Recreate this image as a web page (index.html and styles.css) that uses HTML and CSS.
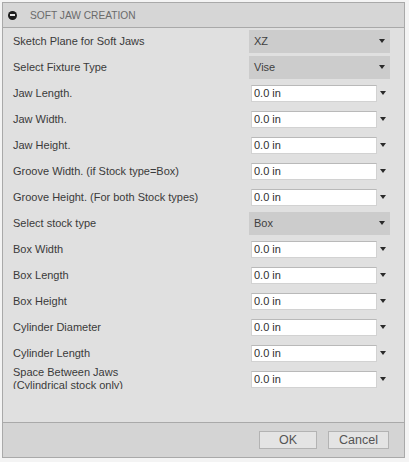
FILE: index.html
```html
<!DOCTYPE html>
<html>
<head>
<meta charset="utf-8">
<link rel="stylesheet" href="styles.css">
</head>
<body>
<div class="panel">
  <div class="header">
    <span class="collapse"><span class="minus"></span></span>
    <span class="title">SOFT JAW CREATION</span>
  </div>
  <div class="body">
    <div class="row"><div class="label">Sketch Plane for Soft Jaws</div><div class="select"><span>XZ</span><span class="tri"></span></div></div>
    <div class="row"><div class="label">Select Fixture Type</div><div class="select"><span>Vise</span><span class="tri"></span></div></div>
    <div class="row"><div class="label">Jaw Length.</div><div class="field"><div class="input">0.0 in</div><span class="tri"></span></div></div>
    <div class="row"><div class="label">Jaw Width.</div><div class="field"><div class="input">0.0 in</div><span class="tri"></span></div></div>
    <div class="row"><div class="label">Jaw Height.</div><div class="field"><div class="input">0.0 in</div><span class="tri"></span></div></div>
    <div class="row"><div class="label">Groove Width. (if Stock type=Box)</div><div class="field"><div class="input">0.0 in</div><span class="tri"></span></div></div>
    <div class="row"><div class="label">Groove Height. (For both Stock types)</div><div class="field"><div class="input">0.0 in</div><span class="tri"></span></div></div>
    <div class="row"><div class="label">Select stock type</div><div class="select"><span>Box</span><span class="tri"></span></div></div>
    <div class="row"><div class="label">Box Width</div><div class="field"><div class="input">0.0 in</div><span class="tri"></span></div></div>
    <div class="row"><div class="label">Box Length</div><div class="field"><div class="input">0.0 in</div><span class="tri"></span></div></div>
    <div class="row"><div class="label">Box Height</div><div class="field"><div class="input">0.0 in</div><span class="tri"></span></div></div>
    <div class="row"><div class="label">Cylinder Diameter</div><div class="field"><div class="input">0.0 in</div><span class="tri"></span></div></div>
    <div class="row"><div class="label">Cylinder Length</div><div class="field"><div class="input">0.0 in</div><span class="tri"></span></div></div>
    <div class="row"><div class="label label-two">Space Between Jaws<br>(Cylindrical stock only)</div><div class="field"><div class="input">0.0 in</div><span class="tri"></span></div></div>
  </div>
  <div class="footer">
    <button class="btn btn-ok">OK</button>
    <button class="btn btn-cancel">Cancel</button>
  </div>
</div>
</body>
</html>
```
FILE: styles.css
```css
html, body {
  margin: 0;
  padding: 0;
  background: #f4f4f4;
  font-family: "Liberation Sans", Arial, sans-serif;
}
.panel {
  margin: 2px 0 0 2px;
  width: 401px;
  border: 1px solid #a9a9a9;
  background: #e0e0e0;
}
.header {
  height: 24px;
  background: #d6d6d6;
  border-bottom: 1px solid #a9a9a9;
  display: flex;
  align-items: center;
}
.collapse {
  width: 9px;
  height: 9px;
  border-radius: 50%;
  background: #1e1e1e;
  margin-left: 5px;
  display: flex;
  align-items: center;
  justify-content: center;
}
.minus {
  width: 5px;
  height: 2px;
  background: #e8e8e8;
}
.title {
  margin-left: 13px;
  font-size: 10.2px;
  color: #6a6a6a;
}
.body {
  height: 395px;
  border-bottom: 1px solid #a9a9a9;
  padding: 0 14px 0 10px;
  box-sizing: border-box;
}
.row {
  height: 26px;
  display: grid;
  grid-template-columns: 1fr 141px;
  align-items: center;
}
.label {
  font-size: 11px;
  color: #3a3a3a;
  white-space: nowrap;
}
.label-two {
  line-height: 13px;
  height: 23px;
  overflow: hidden;
  align-self: start;
  margin-top: 0;
}
.select {
  height: 23px;
  background: #cccccc;
  display: flex;
  align-items: center;
  justify-content: space-between;
  padding: 0 5px 0 5px;
  box-sizing: border-box;
  font-size: 11px;
  color: #404040;
}
.tri {
  width: 0;
  height: 0;
  border-left: 3.5px solid transparent;
  border-right: 3.5px solid transparent;
  border-top: 4px solid #2a2a2a;
}
.field {
  display: flex;
  align-items: center;
}
.input {
  margin-left: 2px;
  width: 126px;
  height: 17px;
  box-sizing: border-box;
  background: #ffffff;
  border: 1px solid #d2d2d2;
  border-top-color: #b9b9b9;
  font-size: 11px;
  line-height: 15px;
  padding-left: 2px;
  color: #303030;
}
.field .tri {
  margin-left: 3px;
}
.footer {
  height: 34px;
  background: #d4d4d4;
  display: flex;
  justify-content: flex-end;
  align-items: flex-start;
  padding: 8px 15px 0 0;
  box-sizing: border-box;
  gap: 11px;
}
.btn {
  height: 18px;
  margin: 0;
  padding: 0;
  border: 1px solid #b3b3b3;
  background: #e4e4e4;
  color: #555555;
  font-family: "Liberation Sans", Arial, sans-serif;
  font-size: 12.5px;
  line-height: 16px;
}
.btn-ok { width: 58px; }
.btn-cancel { width: 61px; }
```
